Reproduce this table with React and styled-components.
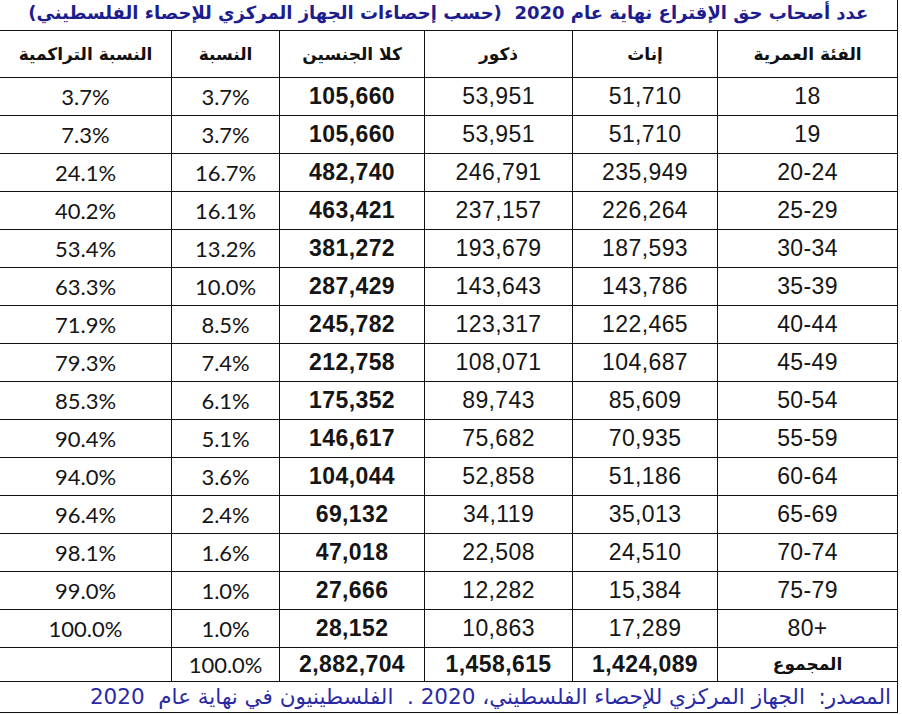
import React from "react";
import styled, { createGlobalStyle } from "styled-components";

const GlobalStyle = createGlobalStyle`
  html, body {
    margin: 0;
    padding: 0;
    background: #ffffff;
  }
  body {
    font-family: "Liberation Sans", "DejaVu Sans", sans-serif;
    color: #111;
  }
`;

const Wrapper = styled.div`
  width: 902px;
  height: 715px;
  overflow: hidden;
  background: #fff;
`;

const Sheet = styled.table`
  direction: rtl;
  border-collapse: collapse;
  table-layout: fixed;
  width: 898px;
  margin-left: -1px;
  margin-right: 5px;

  td,
  th {
    border: 1px solid #111;
    padding: 0;
    text-align: center;
    vertical-align: middle;
    overflow: hidden;
    white-space: nowrap;
  }
`;

const Row = styled.tr`
  height: ${(p) => p.$h}px;
`;

const TitleCell = styled.td`
  && {
    border-top: none;
    border-left: none;
    padding-bottom: 3px;
  }
  color: #1d1d8e;
  font-family: "DejaVu Sans", sans-serif;
  font-weight: bold;
  font-size: 18px;
  line-height: 1;
`;

const HeadCell = styled.th`
  font-family: "DejaVu Sans", sans-serif;
  font-weight: bold;
  font-size: 17px;
  color: #111;
`;

const NumCell = styled.td`
  direction: ltr;
  font-family: ${(p) =>
    p.$pct ? '"Lato", "Liberation Sans", sans-serif' : '"Liberation Sans", Arial, sans-serif'};
  font-weight: ${(p) => (p.$bold ? "bold" : "normal")};
  font-size: ${(p) => (p.$pct ? "22px" : "23px")};
  letter-spacing: ${(p) => (p.$pct ? "0" : "0.4px")};
  color: #151515;
`;

const LabelCell = styled.td`
  font-family: "DejaVu Sans", sans-serif;
  font-weight: bold;
  font-size: 17px;
`;

const SourceCell = styled.td`
  && {
    text-align: right;
    padding-right: 6px;
  }
  color: #2a2aa6;
  font-family: "DejaVu Sans", sans-serif;
  font-size: 21.5px;
  line-height: 1;
`;

const rows = [
  ["18", "51,710", "53,951", "105,660", "3.7%", "3.7%"],
  ["19", "51,710", "53,951", "105,660", "3.7%", "7.3%"],
  ["20-24", "235,949", "246,791", "482,740", "16.7%", "24.1%"],
  ["25-29", "226,264", "237,157", "463,421", "16.1%", "40.2%"],
  ["30-34", "187,593", "193,679", "381,272", "13.2%", "53.4%"],
  ["35-39", "143,786", "143,643", "287,429", "10.0%", "63.3%"],
  ["40-44", "122,465", "123,317", "245,782", "8.5%", "71.9%"],
  ["45-49", "104,687", "108,071", "212,758", "7.4%", "79.3%"],
  ["50-54", "85,609", "89,743", "175,352", "6.1%", "85.3%"],
  ["55-59", "70,935", "75,682", "146,617", "5.1%", "90.4%"],
  ["60-64", "51,186", "52,858", "104,044", "3.6%", "94.0%"],
  ["65-69", "35,013", "34,119", "69,132", "2.4%", "96.4%"],
  ["70-74", "24,510", "22,508", "47,018", "1.6%", "98.1%"],
  ["75-79", "15,384", "12,282", "27,666", "1.0%", "99.0%"],
  ["80+", "17,289", "10,863", "28,152", "1.0%", "100.0%"],
];

const widths = [180, 145, 148, 145, 108, 172];

export default function App() {
  return (
    <Wrapper>
      <GlobalStyle />
      <Sheet>
        <colgroup>
          {widths.map((w, i) => (
            <col key={i} style={{ width: w }} />
          ))}
        </colgroup>
        <tbody>
          <Row $h={30}>
            <TitleCell colSpan={6}>
              عدد أصحاب حق الإقتراع نهاية عام 2020 &nbsp;(حسب إحصاءات الجهاز المركزي للإحصاء الفلسطيني)
            </TitleCell>
          </Row>
          <Row $h={47}>
            <HeadCell>الفئة العمرية</HeadCell>
            <HeadCell>إناث</HeadCell>
            <HeadCell>ذكور</HeadCell>
            <HeadCell>كلا الجنسين</HeadCell>
            <HeadCell>النسبة</HeadCell>
            <HeadCell>النسبة التراكمية</HeadCell>
          </Row>
          {rows.map((r) => (
            <Row $h={38} key={r[0]}>
              <NumCell>{r[0]}</NumCell>
              <NumCell>{r[1]}</NumCell>
              <NumCell>{r[2]}</NumCell>
              <NumCell $bold>{r[3]}</NumCell>
              <NumCell $pct>{r[4]}</NumCell>
              <NumCell $pct>{r[5]}</NumCell>
            </Row>
          ))}
          <Row $h={34}>
            <LabelCell>المجموع</LabelCell>
            <NumCell $bold>1,424,089</NumCell>
            <NumCell $bold>1,458,615</NumCell>
            <NumCell $bold>2,882,704</NumCell>
            <NumCell $pct>100.0%</NumCell>
            <NumCell $pct></NumCell>
          </Row>
          <Row $h={31}>
            <SourceCell colSpan={6}>
              المصدر: &nbsp;الجهاز المركزي للإحصاء الفلسطيني، 2020 . &nbsp;الفلسطينيون في نهاية عام &nbsp;2020
            </SourceCell>
          </Row>
        </tbody>
      </Sheet>
    </Wrapper>
  );
}
